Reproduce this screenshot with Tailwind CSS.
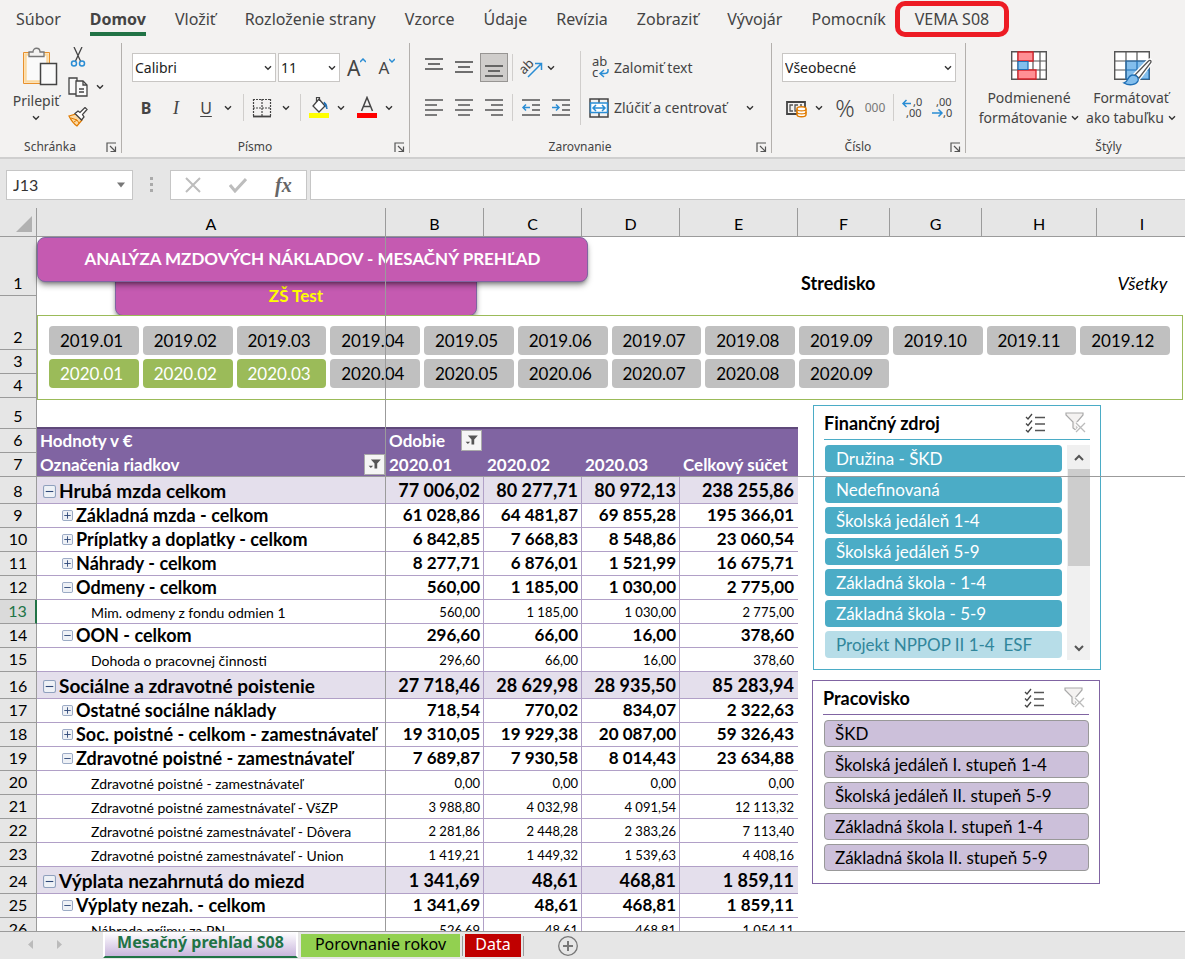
<!DOCTYPE html>
<html lang="sk">

<head>
  <meta charset="UTF-8" />
  <meta name="viewport" content="width=device-width, initial-scale=1.0" />
  <script src="https://cdn.jsdelivr.net/npm/@tailwindcss/browser@4"></script>
  <title>Mesačný prehľad S08</title>
</head>

<body class="h-screen flex flex-col overflow-hidden bg-[#e6e6e6] font-['Noto_Sans','Open_Sans',sans-serif] text-[#444]">
  <!-- Shared icons -->
  <svg class="hidden" xmlns="http://www.w3.org/2000/svg">
    <symbol id="chevron" viewBox="0 0 8 6">
      <path d="M1 1.2l3 3 3-3" fill="none" stroke="#333" stroke-width="1.4" />
    </symbol>
    <symbol id="launcher" viewBox="0 0 11 11">
      <path d="M1 10V1h9M4 4l5 5M9.500 4.500v5h-5" fill="none" stroke="#555" stroke-width="1.200" />
    </symbol>
    <symbol id="minus" viewBox="0 0 12 12">
      <rect x=".5" y=".5" width="11" height="11" rx="1.500" fill="#eef1f6" stroke="#8fa0bd" />
      <path d="M2.500 6h7" stroke="#2f4878" />
    </symbol>
    <symbol id="plus" viewBox="0 0 12 12">
      <rect x=".5" y=".5" width="11" height="11" rx="1.500" fill="#eef1f6" stroke="#8fa0bd" />
      <path d="M2.500 6h7M6 2.500v7" stroke="#2f4878" />
    </symbol>
    <symbol id="filter" viewBox="0 0 21 21">
      <path d="M6.500 5h11l-4 4.500V15h-3V9.500z" fill="#555" />
      <path d="M4 12h5l-2.500 2.500z" fill="#555" />
    </symbol>
    <symbol id="multi" viewBox="0 0 20 20">
      <path d="M1 4l2 2 4-5M1 10.500l2 2 4-5M1 17l2 2 4-5" fill="none" stroke="#444" stroke-width="1.300" />
      <path d="M10 4.500h10M10 11h10M10 17.500h10" stroke="#555" stroke-width="1.400" />
    </symbol>
    <symbol id="clear" viewBox="0 0 21 21">
      <path d="M1 1h17v2l-6 7v9l-4-3v-6L1 3z" fill="#f4f2f1" stroke="#aaa" stroke-width="1.200" />
      <path d="M11 11l9 9M20 11l-9 9" stroke="#fff" stroke-width="3.500" />
      <path d="M11 11l9 9M20 11l-9 9" stroke="#bbb" stroke-width="1.300" />
    </symbol>
  </svg>

  <!-- Ribbon tabs -->
  <nav class="shrink-0 flex gap-[29px] h-[43px] pl-4 bg-[#f3f2f1] text-base leading-[38px] whitespace-nowrap">
    <a href="#">Súbor</a>
    <a href="#" class="relative font-bold after:absolute after:inset-x-0 after:top-8 after:h-1 after:bg-[#217346]">Domov</a>
    <a href="#">Vložiť</a>
    <a href="#">Rozloženie strany</a>
    <a href="#">Vzorce</a>
    <a href="#">Údaje</a>
    <a href="#">Revízia</a>
    <a href="#">Zobraziť</a>
    <a href="#">Vývojár</a>
    <a href="#">Pomocník</a>
    <a href="#" class="relative">VEMA S08
      <span class="absolute -inset-x-5 top-px h-9 rounded-[10px] border-5 border-[#ed1c24]"></span>
    </a>
  </nav>

  <!-- Ribbon -->
  <div class="shrink-0 flex h-[114px] overflow-hidden bg-[#f3f2f1] text-sm">
    <section class="shrink-0 flex flex-col w-[122px] h-[110px] border-r border-[#b3b0ad]">
      <div class="flex-1 flex pl-2">
        <button type="button" class="w-14 flex flex-col items-center pt-1 leading-5">
          <svg class="w-9 h-10 shrink-0 ml-2" viewBox="0 0 36 40" fill="none">
            <path d="M1.500 5.500h26v31h-26z" fill="#fff" stroke="#e8912d" />
            <path d="M3.500 7.500h22v27h-22z" fill="#fafafa" stroke="#fbd9a0" stroke-width="2.500" />
            <path d="M7 9.500V5h4c0-5 7-5 7 0h4v4.500z" fill="#f3f2f1" stroke="#777" stroke-width="1.300" />
            <path d="M18.500 16.500h16v21h-16z" fill="#fafafa" stroke="#444" stroke-width="1.500" />
          </svg>
          <span class="mt-1">Prilepiť</span>
          <svg class="w-2 h-1.5 mt-1"><use href="#chevron" /></svg>
        </button>
        <div class="flex flex-col gap-2 pl-1 pt-1">
          <button type="button" aria-label="Vystrihnúť" class="w-5 h-5">
            <svg class="w-5 h-5" viewBox="0 0 20 20" fill="none">
              <path d="M6 0l6.500 14M14 0L7.500 14" stroke="#444" stroke-width="1.300" />
              <circle cx="6" cy="16.500" r="2.500" stroke="#2a8dd4" stroke-width="1.500" />
              <circle cx="14" cy="16.500" r="2.500" stroke="#2a8dd4" stroke-width="1.500" />
            </svg>
          </button>
          <button type="button" aria-label="Kopírovať" class="h-6 flex items-center gap-2">
            <svg class="w-5 h-5" viewBox="0 0 20 20" fill="#fafafa" stroke="#444" stroke-width="1.300">
              <path d="M8 17H1V1h8v3" />
              <path d="M8 4h7l4 4v11H8z" />
              <path d="M15 4v4h4M11 12h5M11 15h5" fill="none" />
            </svg>
            <svg class="w-2 h-1.5"><use href="#chevron" /></svg>
          </button>
          <button type="button" aria-label="Kopírovať formát" class="w-5 h-5">
            <svg class="w-5 h-5" viewBox="0 0 20 20">
              <path d="M1 9l7-2 6 6-5 6C6 17 3 13 1 9z" fill="#fcd9a2" stroke="#e07b00" stroke-width="1.300" />
              <path d="M3 11l6 2 2 3M6 15l3-2" fill="none" stroke="#e07b00" />
              <path d="M7 6.500l3-2.500 2 1.500 5-5 2 2-4.500 5L16 10l-2.500 3z" fill="#fff" stroke="#444" stroke-width="1.300" />
            </svg>
          </button>
        </div>
      </div>
      <div class="flex items-center text-xs leading-3"><span class="flex-1 text-center">Schránka</span>
        <button type="button" aria-label="Schránka" class="w-[21px] pl-1.5"><svg class="size-[11px]"><use href="#launcher" /></svg></button>
      </div>
    </section>

    <section class="shrink-0 flex flex-col w-72 h-[110px] border-r border-[#b3b0ad]">
      <div class="flex-1 flex flex-col gap-[11px] pl-2.5 pt-2.5">
        <div class="flex items-center h-[29px]">
          <div class="relative mr-0.5">
            <select aria-label="Písmo" class="appearance-none w-36 h-[29px] pl-0.5 bg-white border border-[#c8c6c4] text-[#222]">
              <option>Calibri</option>
            </select>
            <svg class="absolute right-1 top-3 w-2 h-1.5 pointer-events-none"><use href="#chevron" /></svg>
          </div>
          <div class="relative">
            <select aria-label="Veľkosť písma" class="appearance-none w-[62px] h-[29px] pl-0.5 bg-white border border-[#c8c6c4] text-[#222]">
              <option>11</option>
            </select>
            <svg class="absolute right-1 top-3 w-2 h-1.5 pointer-events-none"><use href="#chevron" /></svg>
          </div>
          <button type="button" class="flex items-start ml-[7px] text-[21px] leading-6">A<svg class="w-1.5 h-2.5 mt-0.5" viewBox="0 0 6 10"><path d="M0 4l3-3 3 3" fill="none" stroke="#2a8dd4" stroke-width="1.500" /></svg></button>
          <button type="button" class="flex items-start ml-3 text-[17px] leading-6">A<svg class="w-1.5 h-2.5 mt-0.5" viewBox="0 0 6 10"><path d="M0 1l3 3 3-3" fill="none" stroke="#2a8dd4" stroke-width="1.500" /></svg></button>
        </div>
        <div class="flex items-center h-[29px]">
          <button type="button" class="w-7 text-base font-bold">B</button>
          <button type="button" class="w-8 text-lg font-['Liberation_Serif',serif] italic">I</button>
          <button type="button" class="w-7 text-base underline underline-offset-2">U</button>
          <svg class="w-2 h-1.5 ml-1"><use href="#chevron" /></svg>
          <div class="w-px h-[27px] ml-[11px] mr-2 bg-[#d0cecc]"></div>
          <button type="button" aria-label="Orámovanie" class="flex items-center gap-2.5">
            <svg class="size-5" viewBox="0 0 20 20" fill="none" stroke="#444" stroke-width="1.200">
              <path d="M1 1.500h18M1.500 1v17M18.500 1v17M10 1v17M1 10h18" stroke-dasharray="2 1" />
              <path d="M1 18.500h18" stroke-width="1.800" />
            </svg>
            <svg class="w-2 h-1.5"><use href="#chevron" /></svg>
          </button>
          <div class="w-px h-[27px] ml-2.5 mr-2 bg-[#d0cecc]"></div>
          <button type="button" aria-label="Farba výplne" class="flex items-center gap-2">
            <svg class="w-5 h-6" viewBox="0 0 20 24">
              <path d="M10 3l6 7-6 6-6-6z" fill="#fff" stroke="#444" stroke-width="1.300" />
              <path d="M7.500 6V1.500h3V5" fill="none" stroke="#444" stroke-width="1.200" />
              <path d="M15 6c2 1 3 3 3 7l-2-4z" fill="#1f6fb5" stroke="#1f6fb5" />
              <path d="M0 17h20v5H0z" fill="#ff0" />
            </svg>
            <svg class="w-2 h-1.5"><use href="#chevron" /></svg>
          </button>
          <button type="button" aria-label="Farba písma" class="flex items-center gap-2 ml-3">
            <svg class="w-5 h-6" viewBox="0 0 20 24">
              <path d="M4.500 15L10 1.500 15.500 15M6.500 10.500h7" fill="none" stroke="#444" stroke-width="1.500" />
              <path d="M0 17h20v5H0z" fill="#f00" />
            </svg>
            <svg class="w-2 h-1.5"><use href="#chevron" /></svg>
          </button>
        </div>
      </div>
      <div class="flex items-center text-xs leading-3"><span class="flex-1 text-center">Písmo</span>
        <button type="button" aria-label="Nastavenie písma" class="w-[21px] pl-1.5"><svg class="size-[11px]"><use href="#launcher" /></svg></button>
      </div>
    </section>

    <section class="shrink-0 flex flex-col w-[362px] h-[110px] border-r border-[#b3b0ad]">
      <div class="flex-1 flex pl-[9px]">
        <div class="flex flex-col gap-[11px] pt-2.5 w-[161px]">
          <div class="flex items-center h-[29px]">
            <button type="button" aria-label="Zarovnať hore" class="w-[30px] h-[29px] grid place-items-center">
              <svg class="size-5" viewBox="0 0 20 20" stroke="#444" stroke-width="1.500"><path d="M1 1h18M4 6h12M1 11h18" /></svg>
            </button>
            <button type="button" aria-label="Zarovnať na stred" class="w-[30px] h-[29px] grid place-items-center">
              <svg class="size-5" viewBox="0 0 20 20" stroke="#444" stroke-width="1.500"><path d="M1 4h18M4 9h12M1 14h18" /></svg>
            </button>
            <button type="button" aria-label="Zarovnať dole" class="w-7 h-[29px] ml-px grid place-items-center bg-[#cfcdcb] border border-[#979593]">
              <svg class="size-5" viewBox="0 0 20 20" stroke="#444" stroke-width="1.500"><path d="M1 8h18M4 13h12M1 18h18" /></svg>
            </button>
            <div class="w-px h-[27px] mx-1 bg-[#d0cecc]"></div>
            <button type="button" aria-label="Orientácia" class="flex items-center gap-1 pl-1">
              <svg class="w-[22px] h-5 overflow-visible" viewBox="0 0 22 20">
                <text x="0" y="14" transform="rotate(-45 5 12)" font-size="13" fill="#444">ab</text>
                <path d="M7 19L20 6M14 5.500h6.500V12" fill="none" stroke="#2a8dd4" stroke-width="1.500" />
              </svg>
              <svg class="w-2 h-1.5"><use href="#chevron" /></svg>
            </button>
          </div>
          <div class="flex items-center h-[29px]">
            <button type="button" aria-label="Zarovnať doľava" class="w-[30px] grid place-items-center">
              <svg class="size-5" viewBox="0 0 20 20" stroke="#555" stroke-width="1.500"><path d="M1 2h18M1 7h12M1 12h18M1 17h12" /></svg>
            </button>
            <button type="button" aria-label="Centrovať" class="w-[30px] grid place-items-center">
              <svg class="size-5" viewBox="0 0 20 20" stroke="#555" stroke-width="1.500"><path d="M1 2h18M4 7h12M1 12h18M4 17h12" /></svg>
            </button>
            <button type="button" aria-label="Zarovnať doprava" class="w-[30px] grid place-items-center">
              <svg class="size-5" viewBox="0 0 20 20" stroke="#555" stroke-width="1.500"><path d="M1 2h18M7 7h12M1 12h18M7 17h12" /></svg>
            </button>
            <div class="w-px h-[27px] mx-[3px] bg-[#d0cecc]"></div>
            <button type="button" aria-label="Zmenšiť zarážku" class="w-[30px] grid place-items-center">
              <svg class="size-5" viewBox="0 0 20 20" fill="none" stroke="#555" stroke-width="1.500"><path d="M1 2h18M11 7h8M11 12h8M1 17h18" /><path d="M9 9.500H2M5 6.500l-3 3 3 3" stroke="#2a8dd4" /></svg>
            </button>
            <button type="button" aria-label="Zväčšiť zarážku" class="w-[30px] grid place-items-center">
              <svg class="size-5" viewBox="0 0 20 20" fill="none" stroke="#555" stroke-width="1.500"><path d="M1 2h18M11 7h8M11 12h8M1 17h18" /><path d="M1 9.500h7M5 6.500l3 3-3 3" stroke="#2a8dd4" /></svg>
            </button>
          </div>
        </div>
        <div class="w-px h-[74px] mt-2 bg-[#d0cecc]"></div>
        <div class="flex flex-col gap-[11px] pt-2.5 pl-2">
          <button type="button" class="flex items-center gap-[5px] h-[29px]">
            <svg class="size-5 overflow-visible" viewBox="0 0 20 20">
              <text x="3" y="8" font-size="13" fill="#444">ab</text>
              <text x="3" y="19" font-size="13" fill="#444">c</text>
              <path d="M19 11v2c0 2-2 2.500-4 2.500h-3M15 12l-4 3.500 4 3.500" fill="none" stroke="#2a8dd4" stroke-width="1.500" />
            </svg>
            Zalomiť text
          </button>
          <button type="button" class="flex items-center gap-[5px] h-[29px]">
            <svg class="size-5" viewBox="0 0 20 20" fill="none">
              <path d="M1 1h18v18H1zM10 1v4M10 15v4" stroke="#444" stroke-width="1.500" />
              <path d="M1.500 5h17v9.500h-17z" fill="#fff" stroke="#2a8dd4" stroke-width="1.500" />
              <path d="M4 10h12M7 7l-3 3 3 3M13 7l3 3-3 3" stroke="#2a8dd4" stroke-width="1.500" />
            </svg>
            Zlúčiť a centrovať
            <svg class="w-2 h-1.5 ml-3.5"><use href="#chevron" /></svg>
          </button>
        </div>
      </div>
      <div class="flex items-center text-xs leading-3"><span class="flex-1 text-center">Zarovnanie</span>
        <button type="button" aria-label="Nastavenie zarovnania" class="w-[21px] pl-1.5"><svg class="size-[11px]"><use href="#launcher" /></svg></button>
      </div>
    </section>

    <section class="shrink-0 flex flex-col w-[194px] h-[110px] border-r border-[#b3b0ad]">
      <div class="flex-1 flex flex-col gap-[11px] pl-2.5 pt-2.5">
        <div class="relative w-[174px]">
          <select aria-label="Formát čísla" class="appearance-none w-full h-[29px] pl-0.5 bg-white border border-[#c8c6c4] text-[#222]">
            <option>Všeobecné</option>
          </select>
          <svg class="absolute right-1 top-3 w-2 h-1.5 pointer-events-none"><use href="#chevron" /></svg>
        </div>
        <div class="flex items-center h-[29px] pl-1">
          <button type="button" aria-label="Účtovnícky formát" class="flex items-center gap-2">
            <svg class="w-[21px] h-5" viewBox="0 0 21 20" fill="none">
              <path d="M1 4h18v12H1z" stroke="#444" stroke-width="1.800" />
              <path d="M7 7H4v6h3M12 7H9v6h2M14 7h2" stroke="#555" stroke-width="1.300" />
              <path d="M11 10.500v6c0 3 9 3 9 0v-6c0-2.500-9-2.500-9 0z" fill="#fff" stroke="#e07b00" stroke-width="1.500" />
              <path d="M11 11c0 2.500 9 2.500 9 0M11 14c0 2.500 9 2.500 9 0" stroke="#e07b00" stroke-width="1.300" />
            </svg>
            <svg class="w-2 h-1.5"><use href="#chevron" /></svg>
          </button>
          <button type="button" class="w-6 ml-2.5 text-2xl leading-[29px] font-light">%</button>
          <button type="button" class="w-7 ml-1 text-xs text-[#777]">000</button>
          <div class="w-px h-[27px] ml-1 mr-2 bg-[#d0cecc]"></div>
          <button type="button" aria-label="Pridať desatinné miesto">
            <svg class="w-5 h-5 overflow-visible" viewBox="0 0 20 20">
              <text x="11" y="8" font-size="11" fill="#444">,0</text>
              <text x="4" y="19" font-size="11" fill="#444">,00</text>
              <path d="M9 5.500H1M4.500 2L1 5.500 4.500 9" fill="none" stroke="#2a8dd4" stroke-width="1.500" />
            </svg>
          </button>
          <button type="button" aria-label="Odobrať desatinné miesto" class="ml-2.5">
            <svg class="w-5 h-5 overflow-visible" viewBox="0 0 20 20">
              <text x="4" y="8" font-size="11" fill="#444">,00</text>
              <text x="11" y="19" font-size="11" fill="#444">,0</text>
              <path d="M0 15h10M6.500 11.500L10 15l-3.500 3.500" fill="none" stroke="#2a8dd4" stroke-width="1.500" />
            </svg>
          </button>
        </div>
      </div>
      <div class="flex items-center text-xs leading-3"><span class="flex-1 text-center">Číslo</span>
        <button type="button" aria-label="Nastavenie čísla" class="w-[21px] pl-1.5"><svg class="size-[11px]"><use href="#launcher" /></svg></button>
      </div>
    </section>

    <section class="shrink-0 flex flex-col w-[285px] h-[110px]">
      <div class="flex-1 flex pl-3 leading-5">
        <button type="button" class="shrink-0 w-[102px] flex flex-col items-center pt-2">
          <svg class="w-9 h-[29px] shrink-0 mb-2" viewBox="0 0 36 29" fill="none">
            <path d="M.7.700h34.600v27.600H.700z" fill="#fff" stroke="#555" stroke-width="1.400" />
            <path d="M1 10h34M1 19h34M7 1v27M29 1v27M22 1v27" stroke="#555" stroke-width="1.200" />
            <path d="M7 1h15v9H7zM7 19h18v9H7z" fill="#ff8f94" stroke="#d8232a" stroke-width="1.300" />
            <path d="M7 10.500h10v8H7z" fill="#83beec" stroke="#1f6fb5" stroke-width="1.200" />
          </svg>
          <span>Podmienené</span>
          <span class="flex items-center gap-1 whitespace-nowrap">formátovanie <svg class="w-2 h-1.5"><use href="#chevron" /></svg></span>
        </button>
        <button type="button" class="shrink-0 w-[102px] flex flex-col items-center pt-2">
          <svg class="w-[38px] h-[35px] shrink-0 mb-0.5 ml-1" viewBox="0 0 38 35" fill="none">
            <path d="M.7.700h34.600v27.600H.700z" fill="#fff" stroke="#555" stroke-width="1.400" />
            <path d="M12 10h23v18H12z" fill="#83beec" />
            <path d="M1 10h34M1 19h11M12 1v27M23 1v9" stroke="#555" stroke-width="1.200" />
            <path d="M12 10h23v18H12zM12 19h23M23 10v18" stroke="#1f6fb5" stroke-width="1.200" />
            <path d="M21 24L34 10.500c2-2 4-1 2.500 1.500L25 27z" fill="#fff" stroke="#fff" stroke-width="4" />
            <path d="M21 24L34 10.500c2-2 4-1 2.500 1.500L25 27z" fill="#fff" stroke="#555" stroke-width="1.300" />
            <path d="M10 32c5-1 3-8 9-8 4 0 6 3 5 6-2 4-9 5-14 2z" fill="#83beec" stroke="#1f6fb5" stroke-width="1.300" />
          </svg>
          <span>Formátovať</span>
          <span class="flex items-center gap-1 whitespace-nowrap">ako tabuľku <svg class="w-2 h-1.5"><use href="#chevron" /></svg></span>
        </button>
      </div>
      <div class="text-xs leading-3 text-center">Štýly</div>
    </section>
  </div>

  <!-- Formula bar -->
  <div class="shrink-0 flex items-start h-[51px] pl-1.5 pt-[11px] border-t-2 border-[#cfcfcf] bg-[#e6e6e6] font-['Lato',sans-serif]">
    <div class="relative">
      <input type="text" aria-label="Pole názvov" value="J13" class="w-[127px] h-[30px] pl-1.5 pb-0.5 bg-white border border-[#c6c6c6] text-base text-[#333]" />
      <svg class="absolute right-2 top-3 w-2 h-1.5" viewBox="0 0 8 5"><path d="M0 0h8L4 5z" fill="#777" /></svg>
    </div>
    <svg class="w-[3px] h-[15px] mx-[17px] mt-[7px]" viewBox="0 0 3 15"><path d="M0 0h3v3H0zM0 6h3v3H0zM0 12h3v3H0z" fill="#aaa" /></svg>
    <div class="flex items-center gap-7 w-[137px] h-[30px] mr-[3px] pl-3.5 bg-white border border-[#c6c6c6]">
      <button type="button" aria-label="Zrušiť"><svg class="size-4" viewBox="0 0 16 16"><path d="M1 1l14 14M15 1L1 15" stroke="#bdbdbd" stroke-width="2" /></svg></button>
      <button type="button" aria-label="Zadať"><svg class="w-[18px] h-4" viewBox="0 0 18 16"><path d="M1 8l5 6L17 2" fill="none" stroke="#bdbdbd" stroke-width="3" /></svg></button>
      <button type="button" class="font-['Liberation_Serif',serif] italic font-bold text-xl leading-6 text-[#666]">fx</button>
    </div>
    <input type="text" aria-label="Riadok vzorcov" class="flex-1 min-w-0 h-[30px] px-2 bg-white border border-r-0 border-[#c6c6c6]" />
  </div>

  <!-- Sheet -->
  <main class="relative flex-1 min-h-0 overflow-hidden bg-white font-['Lato','Noto_Sans',sans-serif] text-black">
    <table class="table-fixed w-full border-separate border-spacing-0 whitespace-nowrap leading-[21px] [&_tbody_th]:bg-[#e6e6e6] [&_tbody_th]:border-b [&_tbody_th]:border-r [&_tbody_th]:border-[#9b9b9b] [&_tbody_th]:align-bottom [&_tbody_th]:font-normal [&_tbody_th]:text-base [&_tbody_th]:leading-[21px] [&_tbody_th]:pb-0.5 [&_td]:align-bottom [&_td]:pb-0.5">
      <colgroup>
        <col class="w-[37px]" />
        <col class="w-[349px]" />
        <col class="w-[98px]" />
        <col class="w-[98px]" />
        <col class="w-[98px]" />
        <col class="w-[118px]" />
        <col class="w-[92px]" />
        <col class="w-[92px]" />
        <col class="w-[115px]" />
        <col class="w-[91px]" />
        <col />
      </colgroup>
      <thead class="bg-[#e6e6e6] text-base [&_th]:h-[29px] [&_th]:p-0 [&_th]:pt-1 [&_th]:font-normal [&_th]:border-b [&_th]:border-r [&_th]:border-[#9b9b9b]">
        <tr>
          <th><svg class="size-4 ml-4" viewBox="0 0 16 16"><path d="M16 0v16H0z" fill="#b1b1b1" /></svg></th>
          <th>A</th>
          <th>B</th>
          <th>C</th>
          <th>D</th>
          <th>E</th>
          <th>F</th>
          <th>G</th>
          <th>H</th>
          <th>I</th>
          <th></th>
        </tr>
      </thead>
      <tbody>
        <tr class="h-[59px] text-lg leading-[21px]">
          <th>1</th>
          <td colspan="5"></td>
          <td class="pl-[3px]"><strong>Stredisko</strong></td>
          <td colspan="2"></td>
          <td class="text-center italic">Všetky</td>
        </tr>
        <tr class="h-[54px]"><th>2</th></tr>
        <tr class="h-6"><th>3</th></tr>
        <tr class="h-6"><th>4</th></tr>
        <tr class="h-[31px]">
          <th>5</th>
          <td colspan="5" class="border-b-2 border-[#5f497a]"></td>
        </tr>
      </tbody>
      <tbody class="text-[17px] font-bold text-white [&_td]:bg-[#8064a2] [&_td]:pl-[3px]">
        <tr class="h-6">
          <th class="text-black">6</th>
          <td>Hodnoty v €</td>
          <td colspan="4">
            <div class="flex items-center gap-4 h-[21px]">Odobie
              <button type="button" aria-label="Filter Odobie" class="size-[21px] bg-[#f5f5f5] border border-[#aaa]"><svg class="size-[19px]"><use href="#filter" /></svg></button>
            </div>
          </td>
        </tr>
        <tr class="h-6">
          <th class="text-black">7</th>
          <td>
            <div class="flex items-center justify-between h-[21px] pr-px">Označenia riadkov
              <button type="button" aria-label="Filter riadkov" class="size-[21px] bg-[#f5f5f5] border border-[#aaa]"><svg class="size-[19px]"><use href="#filter" /></svg></button>
            </div>
          </td>
          <td>2020.01</td>
          <td>2020.02</td>
          <td>2020.03</td>
          <td>Celkový súčet</td>
        </tr>
      </tbody>
      <tbody class="[&_td]:border-b [&_td]:border-[#b1a0c7] [&_td]:pr-[3px] [&_td]:text-right [&_td:first-of-type]:text-left [&_td:not(:last-child)]:border-r [&_td:last-child]:pr-1 [&_td>div]:flex [&_td>div]:items-center [&_td>div]:gap-[3px] [&_td>div]:h-[21px] [&_button]:mt-0.5">
        <tr class="h-[27px] bg-[#e4dfec] font-bold text-lg leading-[21px]">
          <th>8</th>
          <td><div class="pl-1.5 text-[19px]"><button type="button" aria-label="Zbaliť"><svg class="size-[13px]"><use href="#minus" /></svg></button>Hrubá mzda celkom</div></td>
          <td>77 006,02</td>
          <td>80 277,71</td>
          <td>80 972,13</td>
          <td>238 255,86</td>
        </tr>
        <tr class="h-6 font-bold text-[17px]">
          <th>9</th>
          <td><div class="pl-[25px] text-lg"><button type="button" aria-label="Rozbaliť"><svg class="size-[11px]"><use href="#plus" /></svg></button>Základná mzda - celkom</div></td>
          <td>61 028,86</td>
          <td>64 481,87</td>
          <td>69 855,28</td>
          <td>195 366,01</td>
        </tr>
        <tr class="h-6 font-bold text-[17px]">
          <th>10</th>
          <td><div class="pl-[25px] text-lg"><button type="button" aria-label="Rozbaliť"><svg class="size-[11px]"><use href="#plus" /></svg></button>Príplatky a doplatky - celkom</div></td>
          <td>6 842,85</td>
          <td>7 668,83</td>
          <td>8 548,86</td>
          <td>23 060,54</td>
        </tr>
        <tr class="h-6 font-bold text-[17px]">
          <th>11</th>
          <td><div class="pl-[25px] text-lg"><button type="button" aria-label="Rozbaliť"><svg class="size-[11px]"><use href="#plus" /></svg></button>Náhrady - celkom</div></td>
          <td>8 277,71</td>
          <td>6 876,01</td>
          <td>1 521,99</td>
          <td>16 675,71</td>
        </tr>
        <tr class="h-6 font-bold text-[17px]">
          <th>12</th>
          <td><div class="pl-[25px] text-lg"><button type="button" aria-label="Zbaliť"><svg class="size-[11px]"><use href="#minus" /></svg></button>Odmeny - celkom</div></td>
          <td>560,00</td>
          <td>1 185,00</td>
          <td>1 030,00</td>
          <td>2 775,00</td>
        </tr>
        <tr class="h-6 text-[13px] [&>td]:pb-0!">
          <th class="bg-[#dadada]! border-r-2! border-r-[#217346]! text-[#217346]">13</th>
          <td><div class="pl-[54px] text-sm">Mim. odmeny z fondu odmien 1</div></td>
          <td>560,00</td>
          <td>1 185,00</td>
          <td>1 030,00</td>
          <td>2 775,00</td>
        </tr>
        <tr class="h-6 font-bold text-[17px]">
          <th>14</th>
          <td><div class="pl-[25px] text-lg"><button type="button" aria-label="Zbaliť"><svg class="size-[11px]"><use href="#minus" /></svg></button>OON - celkom</div></td>
          <td>296,60</td>
          <td>66,00</td>
          <td>16,00</td>
          <td>378,60</td>
        </tr>
        <tr class="h-6 text-[13px] [&>td]:pb-0!">
          <th>15</th>
          <td><div class="pl-[54px] text-sm">Dohoda o pracovnej činnosti</div></td>
          <td>296,60</td>
          <td>66,00</td>
          <td>16,00</td>
          <td>378,60</td>
        </tr>
        <tr class="h-[27px] bg-[#e4dfec] font-bold text-lg leading-[21px]">
          <th>16</th>
          <td><div class="pl-1.5 text-[19px]"><button type="button" aria-label="Zbaliť"><svg class="size-[13px]"><use href="#minus" /></svg></button>Sociálne a zdravotné poistenie</div></td>
          <td>27 718,46</td>
          <td>28 629,98</td>
          <td>28 935,50</td>
          <td>85 283,94</td>
        </tr>
        <tr class="h-6 font-bold text-[17px]">
          <th>17</th>
          <td><div class="pl-[25px] text-lg"><button type="button" aria-label="Rozbaliť"><svg class="size-[11px]"><use href="#plus" /></svg></button>Ostatné sociálne náklady</div></td>
          <td>718,54</td>
          <td>770,02</td>
          <td>834,07</td>
          <td>2 322,63</td>
        </tr>
        <tr class="h-6 font-bold text-[17px]">
          <th>18</th>
          <td><div class="pl-[25px] text-lg"><button type="button" aria-label="Rozbaliť"><svg class="size-[11px]"><use href="#plus" /></svg></button>Soc. poistné - celkom - zamestnávateľ</div></td>
          <td>19 310,05</td>
          <td>19 929,38</td>
          <td>20 087,00</td>
          <td>59 326,43</td>
        </tr>
        <tr class="h-6 font-bold text-[17px]">
          <th>19</th>
          <td><div class="pl-[25px] text-lg"><button type="button" aria-label="Zbaliť"><svg class="size-[11px]"><use href="#minus" /></svg></button>Zdravotné poistné - zamestnávateľ</div></td>
          <td>7 689,87</td>
          <td>7 930,58</td>
          <td>8 014,43</td>
          <td>23 634,88</td>
        </tr>
        <tr class="h-6 text-[13px] [&>td]:pb-0!">
          <th>20</th>
          <td><div class="pl-[54px] text-sm">Zdravotné poistné - zamestnávateľ</div></td>
          <td>0,00</td>
          <td>0,00</td>
          <td>0,00</td>
          <td>0,00</td>
        </tr>
        <tr class="h-6 text-[13px] [&>td]:pb-0!">
          <th>21</th>
          <td><div class="pl-[54px] text-sm">Zdravotné poistné zamestnávateľ - VšZP</div></td>
          <td>3 988,80</td>
          <td>4 032,98</td>
          <td>4 091,54</td>
          <td>12 113,32</td>
        </tr>
        <tr class="h-6 text-[13px] [&>td]:pb-0!">
          <th>22</th>
          <td><div class="pl-[54px] text-sm">Zdravotné poistné zamestnávateľ - Dôvera</div></td>
          <td>2 281,86</td>
          <td>2 448,28</td>
          <td>2 383,26</td>
          <td>7 113,40</td>
        </tr>
        <tr class="h-6 text-[13px] [&>td]:pb-0!">
          <th>23</th>
          <td><div class="pl-[54px] text-sm">Zdravotné poistné zamestnávateľ - Union</div></td>
          <td>1 419,21</td>
          <td>1 449,32</td>
          <td>1 539,63</td>
          <td>4 408,16</td>
        </tr>
        <tr class="h-[27px] bg-[#e4dfec] font-bold text-lg leading-[21px]">
          <th>24</th>
          <td><div class="pl-1.5 text-[19px]"><button type="button" aria-label="Zbaliť"><svg class="size-[13px]"><use href="#minus" /></svg></button>Výplata nezahrnutá do miezd</div></td>
          <td>1 341,69</td>
          <td>48,61</td>
          <td>468,81</td>
          <td>1 859,11</td>
        </tr>
        <tr class="h-6 font-bold text-[17px]">
          <th>25</th>
          <td><div class="pl-[25px] text-lg"><button type="button" aria-label="Zbaliť"><svg class="size-[11px]"><use href="#minus" /></svg></button>Výplaty nezah. - celkom</div></td>
          <td>1 341,69</td>
          <td>48,61</td>
          <td>468,81</td>
          <td>1 859,11</td>
        </tr>
        <tr class="h-6 text-[13px] [&>td]:pb-0!">
          <th>26</th>
          <td><div class="pl-[54px] text-sm">Náhrada príjmu za PN</div></td>
          <td>526,69</td>
          <td>48,61</td>
          <td>468,81</td>
          <td>1 054,11</td>
        </tr>
      </tbody>
    </table>

    <!-- Title shapes -->
    <div class="absolute left-[115px] top-16 w-[362px] h-11 pt-[11px] rounded-lg border border-[#8064a2] bg-[#c55ab1] text-center text-[17px] leading-6 font-bold text-[#ff0] shadow-md shadow-black/40">ZŠ Test</div>
    <h1 class="absolute left-[37px] top-[29px] w-[551px] h-[45px] rounded-lg border border-[#8064a2] bg-[#c55ab1] text-center text-[17px] leading-[42px] font-bold text-white shadow-md shadow-black/40">ANALÝZA MZDOVÝCH NÁKLADOV - MESAČNÝ PREHĽAD</h1>

    <!-- Period slicer -->
    <div class="absolute left-[37px] top-[107px] w-[1146px] h-[85px] pl-[11px] pr-3 pt-2.5 border border-[#9bbb59] bg-white grid grid-cols-12 content-start gap-1 text-[17px] [&>button]:h-[29px] [&>button]:pl-[11px] [&>button]:rounded [&>button]:text-left">
      <button type="button" class="bg-[#c0c0c0]">2019.01</button>
      <button type="button" class="bg-[#c0c0c0]">2019.02</button>
      <button type="button" class="bg-[#c0c0c0]">2019.03</button>
      <button type="button" class="bg-[#c0c0c0]">2019.04</button>
      <button type="button" class="bg-[#c0c0c0]">2019.05</button>
      <button type="button" class="bg-[#c0c0c0]">2019.06</button>
      <button type="button" class="bg-[#c0c0c0]">2019.07</button>
      <button type="button" class="bg-[#c0c0c0]">2019.08</button>
      <button type="button" class="bg-[#c0c0c0]">2019.09</button>
      <button type="button" class="bg-[#c0c0c0]">2019.10</button>
      <button type="button" class="bg-[#c0c0c0]">2019.11</button>
      <button type="button" class="bg-[#c0c0c0]">2019.12</button>
      <button type="button" class="bg-[#9bbb59] text-white">2020.01</button>
      <button type="button" class="bg-[#9bbb59] text-white">2020.02</button>
      <button type="button" class="bg-[#9bbb59] text-white">2020.03</button>
      <button type="button" class="bg-[#c0c0c0]">2020.04</button>
      <button type="button" class="bg-[#c0c0c0]">2020.05</button>
      <button type="button" class="bg-[#c0c0c0]">2020.06</button>
      <button type="button" class="bg-[#c0c0c0]">2020.07</button>
      <button type="button" class="bg-[#c0c0c0]">2020.08</button>
      <button type="button" class="bg-[#c0c0c0]">2020.09</button>
    </div>

    <!-- Funding source slicer -->
    <section class="absolute left-[813px] top-[197px] w-72 h-[265px] px-2.5 border border-[#4bacc6] bg-white">
      <header class="flex items-center h-[34px] border-b border-[#4bacc6]">
        <h2 class="flex-1 text-lg leading-6 font-bold">Finančný zdroj</h2>
        <button type="button" aria-label="Viacnásobný výber" class="mr-5"><svg class="size-5"><use href="#multi" /></svg></button>
        <button type="button" aria-label="Vymazať filter" class="mr-1"><svg class="size-[21px]"><use href="#clear" /></svg></button>
      </header>
      <div class="flex gap-[5px] pt-[5px] pl-px">
        <div class="flex-1 flex flex-col gap-1 text-[17px] leading-6 [&>button]:h-[27px] [&>button]:pl-[11px] [&>button]:rounded [&>button]:text-left">
          <button type="button" class="bg-[#4bacc6] text-white">Družina - ŠKD</button>
          <button type="button" class="bg-[#4bacc6] text-white">Nedefinovaná</button>
          <button type="button" class="bg-[#4bacc6] text-white">Školská jedáleň 1-4</button>
          <button type="button" class="bg-[#4bacc6] text-white">Školská jedáleň 5-9</button>
          <button type="button" class="bg-[#4bacc6] text-white">Základná škola - 1-4</button>
          <button type="button" class="bg-[#4bacc6] text-white">Základná škola - 5-9</button>
          <button type="button" class="bg-[#b7dde8] text-[#31869b] whitespace-pre">Projekt NPPOP II 1-4  ESF</button>
        </div>
        <div class="w-[23px] h-[215px] flex flex-col items-center bg-[#f0f0f0]">
          <svg class="w-2.5 h-6" viewBox="0 0 10 24"><path d="M1 15l4-4 4 4" fill="none" stroke="#555" stroke-width="2" /></svg>
          <div class="w-[22px] h-[97px] bg-[#cdcdcd]"></div>
          <svg class="w-2.5 h-6 mt-auto" viewBox="0 0 10 24"><path d="M1 10l4 4 4-4" fill="none" stroke="#555" stroke-width="2" /></svg>
        </div>
      </div>
    </section>

    <!-- Workplace slicer -->
    <section class="absolute left-[812px] top-[472px] w-72 h-[204px] px-2.5 border border-[#8064a2] bg-white">
      <header class="flex items-center h-[34px] border-b border-[#8064a2]">
        <h2 class="flex-1 text-lg leading-6 font-bold">Pracovisko</h2>
        <button type="button" aria-label="Viacnásobný výber" class="mr-5"><svg class="size-5"><use href="#multi" /></svg></button>
        <button type="button" aria-label="Vymazať filter" class="mr-1"><svg class="size-[21px]"><use href="#clear" /></svg></button>
      </header>
      <div class="flex flex-col gap-1 pt-[5px] pl-px text-[17px] leading-6 [&>button]:h-[27px] [&>button]:pl-2.5 [&>button]:rounded [&>button]:border [&>button]:border-[#999] [&>button]:bg-[#ccc0da] [&>button]:text-left">
        <button type="button">ŠKD</button>
        <button type="button">Školská jedáleň I. stupeň 1-4</button>
        <button type="button">Školská jedáleň II. stupeň 5-9</button>
        <button type="button">Základná škola I. stupeň 1-4</button>
        <button type="button">Základná škola II. stupeň 5-9</button>
      </div>
    </section>

    <!-- Frozen pane lines -->
    <div class="absolute left-[385px] top-0 bottom-0 w-px bg-[#9b9b9b]"></div>
    <div class="absolute inset-x-0 top-[268px] h-px bg-[#9b9b9b]"></div>
  </main>

  <!-- Sheet tabs -->
  <footer class="shrink-0 flex items-start h-7 border-t border-[#9b9b9b] bg-[#e6e6e6] text-base leading-5 text-black [&_button]:pb-1">
    <div class="flex gap-6 pt-2 pl-7 w-[103px]">
      <svg class="w-[5px] h-[9px]" viewBox="0 0 5 9"><path d="M5 0v9L0 4.500z" fill="#bbb" /></svg>
      <svg class="w-[5px] h-[9px]" viewBox="0 0 5 9"><path d="M0 0v9l5-4.500z" fill="#bbb" /></svg>
    </div>
    <button type="button" class="w-[195px] h-[26px] border-x-2 border-b-2 border-x-white border-b-[#217346] bg-linear-to-b from-white to-[#c9b6dc] font-bold text-[#217346]">Mesačný prehľad S08</button>
    <button type="button" class="w-[159px] h-[23px] mt-0.5 ml-[3px] bg-[#92d050]">Porovnanie rokov</button>
    <div class="w-px h-5 mt-1 mx-0.5 bg-[#9b9b9b]"></div>
    <button type="button" class="w-14 h-[23px] mt-0.5 bg-[#c00000] text-white">Data</button>
    <div class="w-px h-5 mt-1 mx-0.5 bg-[#9b9b9b]"></div>
    <button type="button" aria-label="Nový hárok" class="ml-8 mt-1">
      <svg class="size-5" viewBox="0 0 20 20" fill="none" stroke="#777"><circle cx="10" cy="10" r="9.300" stroke-width="1.300" /><path d="M10 5v10M5 10h10" stroke-width="2" /></svg>
    </button>
  </footer>
</body>

</html>
